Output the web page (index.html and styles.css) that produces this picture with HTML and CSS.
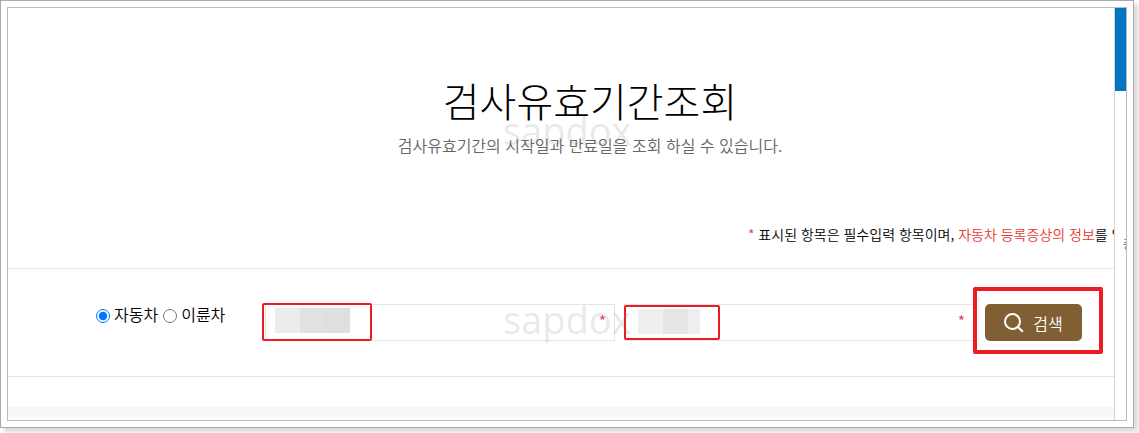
FILE: index.html
```html
<!DOCTYPE html>
<html lang="ko">
<head>
<meta charset="utf-8">
<title>검사유효기간조회</title>
<link rel="stylesheet" href="styles.css">
</head>
<body>
<div class="frame">
  <div class="viewport">
    <main class="page">
      <header class="heading">
        <h1 class="title">검사유효기간조회</h1>
        <p class="subtitle">검사유효기간의 시작일과 만료일을 조회 하실 수 있습니다.</p>
        <span class="watermark watermark-top" aria-hidden="true">sapdox</span>
      </header>
      <p class="note"><span class="req">*</span> 표시된 항목은 필수입력 항목이며, <span class="em">자동차 등록증상의 정보</span>를 입</p>
      <form class="search">
        <div class="kinds">
          <input class="radio" type="radio" name="kind" id="car" checked><label for="car">자동차</label>
          <input class="radio" type="radio" name="kind" id="bike"><label for="bike">이륜차</label>
        </div>
        <div class="field">
          <input class="text" type="text" aria-label="자동차등록번호">
          <span class="star">*</span>
          <span class="mark mark-first"></span>
          <span class="mosaic mosaic-first"></span>
        </div>
        <div class="field">
          <input class="text" type="text" aria-label="생년월일">
          <span class="star">*</span>
          <span class="mark mark-second"></span>
          <span class="mosaic mosaic-second"></span>
        </div>
        <div class="action">
          <button class="submit" type="button">
            <svg class="icon" viewBox="0 0 20 20" aria-hidden="true"><circle cx="8.5" cy="8.5" r="7.5"/><path d="M13.8 13.8L18.8 18.8"/></svg>
            검색
          </button>
          <span class="mark mark-action"></span>
        </div>
        <span class="watermark watermark-form" aria-hidden="true">sapdox</span>
      </form>
      <div class="band"></div>
    </main>
    <aside class="side">
      <div class="side-head"></div>
      <span class="side-text">증</span>
    </aside>
  </div>
</div>
</body>
</html>
```
FILE: styles.css
```css
* { box-sizing: border-box; }

body {
  margin: 0;
  padding: 0 5px 5px 0;
  background: #fff;
  color: #000;
  font-family: "Noto Sans CJK KR", sans-serif;
  font-weight: 350;
  overflow: hidden;
}

.frame {
  padding: 6px;
  border: 1px solid #a9a9a9;
  background: #fff;
  box-shadow: 4px 4px 3px #dedede;
}

.viewport {
  display: flex;
  border: 1px solid #bbb;
}

.page {
  flex: 1;
  min-width: 0;
  overflow: hidden;
  padding-bottom: 3px;
}

.heading {
  position: relative;
  padding: 62px 0 0 58px;
  text-align: center;
}

.title {
  margin: 0;
  font-size: 40px;
  font-weight: 300;
  line-height: 60px;
}

.subtitle {
  margin: 0;
  color: #666;
  font-size: 16px;
  line-height: 30px;
}

.note {
  margin: 62px 0 0;
  padding-left: 740px;
  font-size: 14px;
  line-height: 24px;
  white-space: nowrap;
}

.req { color: #d9434e; }
.em { color: #e8392f; }

.search {
  position: relative;
  display: flex;
  align-items: flex-start;
  margin-top: 22px;
  padding: 35px 0 35px 88px;
  border-top: 1px solid #e5e5e5;
  border-bottom: 1px solid #e5e5e5;
}

.kinds {
  display: flex;
  align-items: center;
  width: 169px;
  font-size: 16px;
  line-height: 20px;
}

.radio {
  width: 14px;
  height: 14px;
  margin: 4px 4px 0 0;
}

.kinds label + .radio { margin-left: 5px; }

.field {
  position: relative;
  width: 350px;
  margin-right: 9px;
}

.text {
  display: block;
  width: 100%;
  height: 37px;
  padding: 0 24px 0 10px;
  border: 1px solid #e5e5e5;
  background: #fff;
  font: inherit;
}

.star {
  position: absolute;
  top: 5px;
  right: 9px;
  color: #d9434e;
  font-size: 16px;
  line-height: 24px;
}

.mark {
  position: absolute;
  border: 2px solid #ed1c24;
  border-radius: 2px;
  pointer-events: none;
}

.mark-first { top: -1px; left: -3px; width: 110px; height: 38px; }
.mark-second { top: 1px; left: 0; width: 96px; height: 35px; }
.mark-action { top: -17px; left: -12px; width: 130px; height: 67px; border-width: 4px; }

.mosaic { position: absolute; height: 25px; }

.mosaic-first {
  top: 4px;
  left: 10px;
  width: 75px;
  background: linear-gradient(90deg, #ececec 25px, #e1e1e3 25px 50px, #dfdfdf 50px);
}

.mosaic-second {
  top: 5px;
  left: 14px;
  width: 62px;
  background: linear-gradient(90deg, #efefef 25px, #e6e5e4 25px 50px, #eceef0 50px);
}

.action {
  position: relative;
  margin-left: 2px;
}

.submit {
  display: flex;
  align-items: center;
  justify-content: center;
  gap: 9px;
  width: 97px;
  height: 37px;
  padding: 0;
  border: 0;
  border-radius: 5px;
  background: #7f5f33;
  color: #fff;
  font: inherit;
  font-size: 16px;
}

.icon {
  width: 20px;
  height: 20px;
  fill: none;
  stroke: #fff;
  stroke-width: 2;
}

.watermark {
  position: absolute;
  left: 495px;
  color: rgba(120, 120, 120, 0.17);
  font-family: "Open Sans", sans-serif;
  font-size: 38px;
  font-weight: 400;
  line-height: 48px;
  pointer-events: none;
}

.watermark-top { top: 98px; }
.watermark-form { top: 26px; }

.band {
  height: 10px;
  margin-top: 30px;
  background: #f7f7f7;
}

.side {
  position: relative;
  width: 12px;
  overflow: hidden;
  border-left: 1px solid #d5d5d5;
}

.side-head {
  height: 83px;
  margin-left: -1px;
  background: #0075c2;
}

.side-text {
  position: absolute;
  top: 226px;
  left: 8px;
  color: #555;
  font-size: 12px;
  line-height: 20px;
}
```
